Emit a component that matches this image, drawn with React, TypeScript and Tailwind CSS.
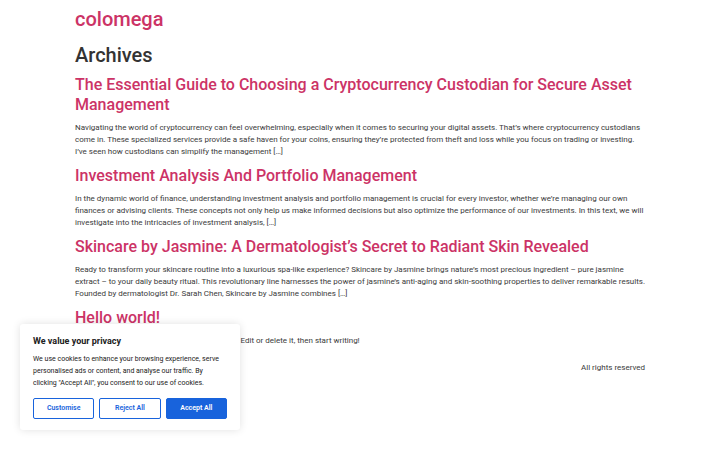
import React from "react";

const posts = [
  {
    title: "The Essential Guide to Choosing a Cryptocurrency Custodian for Secure Asset Management",
    text: "Navigating the world of cryptocurrency can feel overwhelming, especially when it comes to securing your digital assets. That’s where cryptocurrency custodians come in. These specialized services provide a safe haven for your coins, ensuring they’re protected from theft and loss while you focus on trading or investing. I’ve seen how custodians can simplify the management […]",
  },
  {
    title: "Investment Analysis And Portfolio Management",
    text: "In the dynamic world of finance, understanding investment analysis and portfolio management is crucial for every investor, whether we’re managing our own finances or advising clients. These concepts not only help us make informed decisions but also optimize the performance of our investments. In this text, we will investigate into the intricacies of investment analysis, […]",
  },
  {
    title: "Skincare by Jasmine: A Dermatologist’s Secret to Radiant Skin Revealed",
    text: "Ready to transform your skincare routine into a luxurious spa-like experience? Skincare by Jasmine brings nature’s most precious ingredient – pure jasmine extract – to your daily beauty ritual. This revolutionary line harnesses the power of jasmine’s anti-aging and skin-soothing properties to deliver remarkable results. Founded by dermatologist Dr. Sarah Chen, Skincare by Jasmine combines […]",
  },
  {
    title: "Hello world!",
    text: "Welcome to WordPress. This is your first post. Edit or delete it, then start writing!",
  },
];

export default function App() {
  return (
    <div
      className="relative w-[720px] h-[450px] overflow-hidden bg-white text-[#333333]"
      style={{ fontFamily: "Roboto, 'Liberation Sans', sans-serif" }}
    >
      <div className="px-[75px] pt-[7px]">
        <div className="text-[20px] leading-[24px] font-medium text-[#cc3366]">colomega</div>
        <h1 className="mt-[12px] mb-[8.4px] text-[20px] leading-[24px] font-medium text-[#333333]">Archives</h1>
        {posts.map((p) => (
          <article key={p.title}>
            <h2 className="mb-[8.4px] text-[16px] leading-[19.2px] font-medium text-[#cc3366]">{p.title}</h2>
            <p className="mb-[7.4px] text-[8px] leading-[12px] text-[#3a3a3a]">{p.text}</p>
          </article>
        ))}
        <footer className="pt-[7.6px] flex justify-end">
          <p className="text-[8px] leading-[12px] text-[#3a3a3a]">All rights reserved</p>
        </footer>
      </div>

      <div className="absolute left-[20px] bottom-[20px] w-[220px] bg-white rounded-[3px] shadow-[0_0_8px_rgba(0,0,0,0.12)] px-[13px] pt-[11px] pb-[11px]">
        <p className="text-[9px] leading-[12px] font-bold text-[#212121]">We value your privacy</p>
        <p className="mt-[6px] text-[7px] leading-[12px] text-[#212121]">
          We use cookies to enhance your browsing experience, serve personalised ads or content, and analyse our traffic. By clicking "Accept All", you consent to our use of cookies.
        </p>
        <div className="mt-[9px] flex gap-[5px]">
          <button className="flex-1 h-[21px] border border-[#1863dc] rounded-[2px] bg-white text-[#1863dc] text-[7px] font-semibold">Customise</button>
          <button className="flex-1 h-[21px] border border-[#1863dc] rounded-[2px] bg-white text-[#1863dc] text-[7px] font-semibold">Reject All</button>
          <button className="flex-1 h-[21px] border border-[#1863dc] rounded-[2px] bg-[#1863dc] text-white text-[7px] font-semibold">Accept All</button>
        </div>
      </div>
    </div>
  );
}
